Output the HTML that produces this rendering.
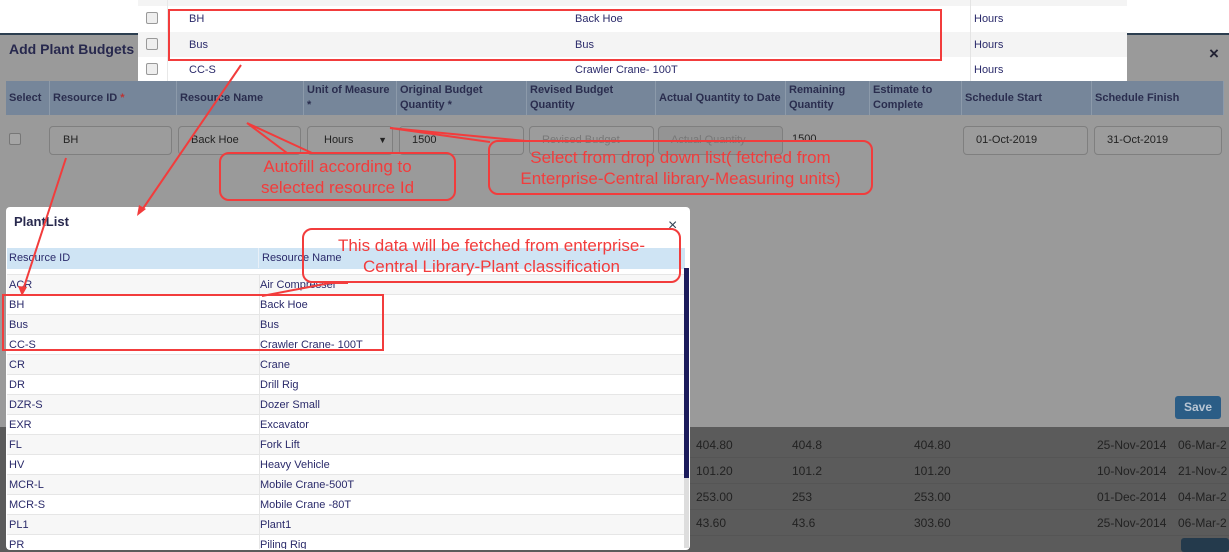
<!DOCTYPE html>
<html><head><meta charset="utf-8"><style>
*{margin:0;padding:0;box-sizing:border-box}
body{width:1229px;height:552px;overflow:hidden;position:relative;background:#9a9a9a;font-family:"Liberation Sans",sans-serif;font-size:12px}
.a{position:absolute}
.hd{position:absolute;top:81px;height:34px;background:#76869a;color:#2a2d4e;font-size:11px;font-weight:bold;padding:2px 3px;line-height:15px;border-right:1px solid #8c9aaa;display:flex;align-items:center}
.inp{position:absolute;top:126px;height:29px;border:1px solid #7f7f7f;border-radius:4px;background:#9c9c9c;color:#222;font-size:11px;padding:0 12px;line-height:27px}
.tr{position:absolute;left:138px;width:989px;height:26px;color:#2a2a6a;font-size:11px;line-height:26px}
.cb{position:absolute;left:8px;top:6px;width:12px;height:12px;border:1px solid #999;border-radius:2px;background:#eee}
.pr{position:absolute;left:7px;width:677px;height:20px;font-size:11px;color:#2a2a6a;line-height:20px;border-top:1px solid #e6e6e6}
.pr span{position:absolute;left:2px}.pr b{font-weight:normal;position:absolute;left:253px}
.br{position:absolute;left:690px;width:539px;height:26px;font-size:12px;color:#222;line-height:26px;border-bottom:1px solid #555}
.br span{position:absolute}
.call{position:absolute;border:2px solid #f23c3c;border-radius:10px;color:#f23c3c;font-size:17px;text-align:center;line-height:21px}
</style></head><body>
<div class="a" style="left:0;top:0;width:1229px;height:33px;background:#fff"></div>
<div class="a" style="left:0;top:33px;width:1229px;height:2px;background:#2c3e50"></div>
<div class="a" style="left:9px;top:41px;font-size:14px;font-weight:bold;color:#27284d">Add Plant Budgets</div>
<div class="a" style="left:1209px;top:44px;font-size:17px;color:#223;font-weight:bold">×</div>
<div class="a" style="left:138px;top:0;width:989px;height:81px;background:#fff"></div>
<div class="tr" style="top:0;height:6px;background:#f4f4f4"></div>
<div class="tr" style="top:6px;background:#fff"><div class="cb"></div><span class="a" style="left:51px">BH</span><span class="a" style="left:437px">Back Hoe</span><span class="a" style="left:836px">Hours</span></div>
<div class="tr" style="top:32px;background:#f4f4f4"><div class="cb"></div><span class="a" style="left:51px">Bus</span><span class="a" style="left:437px">Bus</span><span class="a" style="left:836px">Hours</span></div>
<div class="tr" style="top:57px;background:#fff;height:24px"><div class="cb"></div><span class="a" style="left:51px">CC-S</span><span class="a" style="left:437px">Crawler Crane- 100T</span><span class="a" style="left:836px">Hours</span></div>
<div class="a" style="left:970px;top:0;width:1px;height:81px;background:#e4e4e4"></div>
<div class="a" style="left:167px;top:0;width:1px;height:81px;background:#e8e8e8"></div>
<div class="hd" style="left:6px;width:44px">Select</div>
<div class="hd" style="left:50px;width:127px">Resource ID <span style="color:#b33">&nbsp;*</span></div>
<div class="hd" style="left:177px;width:127px">Resource Name</div>
<div class="hd" style="left:304px;width:93px;align-items:flex-start">Unit of Measure<br>*</div>
<div class="hd" style="left:397px;width:130px">Original Budget Quantity *</div>
<div class="hd" style="left:527px;width:129px">Revised Budget Quantity</div>
<div class="hd" style="left:656px;width:130px">Actual Quantity to Date</div>
<div class="hd" style="left:786px;width:84px">Remaining Quantity</div>
<div class="hd" style="left:870px;width:92px">Estimate to Complete</div>
<div class="hd" style="left:962px;width:130px">Schedule Start</div>
<div class="hd" style="left:1092px;width:132px">Schedule Finish</div>
<div class="a" style="left:9px;top:133px;width:12px;height:12px;border:1px solid #777;border-radius:2px;background:#a5a5a5"></div>
<div class="inp" style="left:49px;width:123px;padding-left:13px">BH</div>
<div class="inp" style="left:178px;width:123px">Back Hoe</div>
<div class="inp" style="left:307px;width:86px;padding-left:16px">Hours<span style="position:absolute;right:5px;font-size:9px">▼</span></div>
<div class="inp" style="left:399px;width:125px">1500</div>
<div class="inp" style="left:529px;width:125px;color:#777">Revised Budget</div>
<div class="inp" style="left:658px;width:125px;color:#777;background:#949494">Actual Quantity</div>
<div class="a" style="left:792px;top:133px;font-size:11px;color:#222">1500</div>
<div class="inp" style="left:963px;width:125px">01-Oct-2019</div>
<div class="inp" style="left:1094px;width:128px">31-Oct-2019</div>
<div class="a" style="left:1175px;top:396px;width:46px;height:23px;background:#2b5d86;border-radius:3px;color:#b9c6d4;font-weight:bold;font-size:12px;text-align:center;line-height:23px">Save</div>
<div class="a" style="left:0;top:427px;width:1229px;height:125px;background:#5b5b5b"></div>
<div class="br" style="top:432px"><span style="left:6px">404.80</span><span style="left:102px">404.8</span><span style="left:224px">404.80</span><span style="left:407px">25-Nov-2014</span><span style="left:488px">06-Mar-2</span></div>
<div class="br" style="top:458px"><span style="left:6px">101.20</span><span style="left:102px">101.2</span><span style="left:224px">101.20</span><span style="left:407px">10-Nov-2014</span><span style="left:488px">21-Nov-2</span></div>
<div class="br" style="top:484px"><span style="left:6px">253.00</span><span style="left:102px">253</span><span style="left:224px">253.00</span><span style="left:407px">01-Dec-2014</span><span style="left:488px">04-Mar-2</span></div>
<div class="br" style="top:510px"><span style="left:6px">43.60</span><span style="left:102px">43.6</span><span style="left:224px">303.60</span><span style="left:407px">25-Nov-2014</span><span style="left:488px">06-Mar-2</span></div>
<div class="a" style="left:1181px;top:538px;width:48px;height:14px;background:#243a4c;border-radius:3px"></div>
<div class="a" style="left:6px;top:207px;width:684px;height:343px;background:#fff;border-radius:4px;overflow:hidden">
<div class="a" style="left:8px;top:7px;font-size:13px;font-weight:bold;color:#27284d">PlantList</div>
<div class="a" style="left:662px;top:10px;font-size:16px;color:#345">×</div>
<div class="a" style="left:1px;top:41px;width:678px;height:21px;background:#cfe4f4;font-size:11px;color:#2a2a6a;line-height:20px"><span class="a" style="left:2px">Resource ID</span><span class="a" style="left:251px;border-left:1px solid #e8f0f8;padding-left:3px">Resource Name</span></div>
<div class="a" style="left:678px;top:61px;width:5px;height:210px;background:#1c1c5c"></div>
<div class="a" style="left:678px;top:271px;width:5px;height:70px;background:#ddd"></div>
</div>
<div class="pr" style="top:274px;background:#f7f7f7"><span>ACR</span><b>Air Compresser</b></div>
<div class="pr" style="top:294px;background:#fff"><span>BH</span><b>Back Hoe</b></div>
<div class="pr" style="top:314px;background:#f7f7f7"><span>Bus</span><b>Bus</b></div>
<div class="pr" style="top:334px;background:#fff"><span>CC-S</span><b>Crawler Crane- 100T</b></div>
<div class="pr" style="top:354px;background:#f7f7f7"><span>CR</span><b>Crane</b></div>
<div class="pr" style="top:374px;background:#fff"><span>DR</span><b>Drill Rig</b></div>
<div class="pr" style="top:394px;background:#f7f7f7"><span>DZR-S</span><b>Dozer Small</b></div>
<div class="pr" style="top:414px;background:#fff"><span>EXR</span><b>Excavator</b></div>
<div class="pr" style="top:434px;background:#f7f7f7"><span>FL</span><b>Fork Lift</b></div>
<div class="pr" style="top:454px;background:#fff"><span>HV</span><b>Heavy Vehicle</b></div>
<div class="pr" style="top:474px;background:#f7f7f7"><span>MCR-L</span><b>Mobile Crane-500T</b></div>
<div class="pr" style="top:494px;background:#fff"><span>MCR-S</span><b>Mobile Crane -80T</b></div>
<div class="pr" style="top:514px;background:#f7f7f7"><span>PL1</span><b>Plant1</b></div>
<div class="pr" style="top:534px;background:#fff;height:15px;overflow:hidden"><span>PR</span><b>Piling Rig</b></div>
<div class="a" style="left:259px;top:274px;width:1px;height:275px;background:#e6e6e6"></div>
<div class="a" style="left:168px;top:9px;width:774px;height:52px;border:2px solid #f23c3c"></div>
<div class="a" style="left:2px;top:294px;width:382px;height:57px;border:2px solid #f23c3c"></div>
<div class="call" style="left:219px;top:152px;width:237px;height:49px;padding-top:2px">Autofill according to<br>selected resource Id</div>
<div class="call" style="left:488px;top:140px;width:385px;height:55px;padding-top:5px">Select from drop down list( fetched from<br>Enterprise-Central library-Measuring units)</div>
<div class="call" style="left:302px;top:228px;width:379px;height:55px;padding-top:5px">This data will be fetched from enterprise-<br>Central Library-Plant classification</div>
<svg class="a" style="left:0;top:0" width="1229" height="552">
<g stroke="#f23c3c" stroke-width="2" fill="none">
<polyline points="287,153 247,123 312,153"/>
<polyline points="490,142 390,128 526,141"/>
<line x1="241" y1="65" x2="142" y2="210"/>
<line x1="66" y1="158" x2="23" y2="290"/>
<polyline points="262,296 330,283 348,283"/>
</g>
<g fill="#f23c3c">
<polygon points="137,216 139,205 146,209"/>
<polygon points="22,296 18,286 27,287"/>
</g>
</svg>
</body></html>
